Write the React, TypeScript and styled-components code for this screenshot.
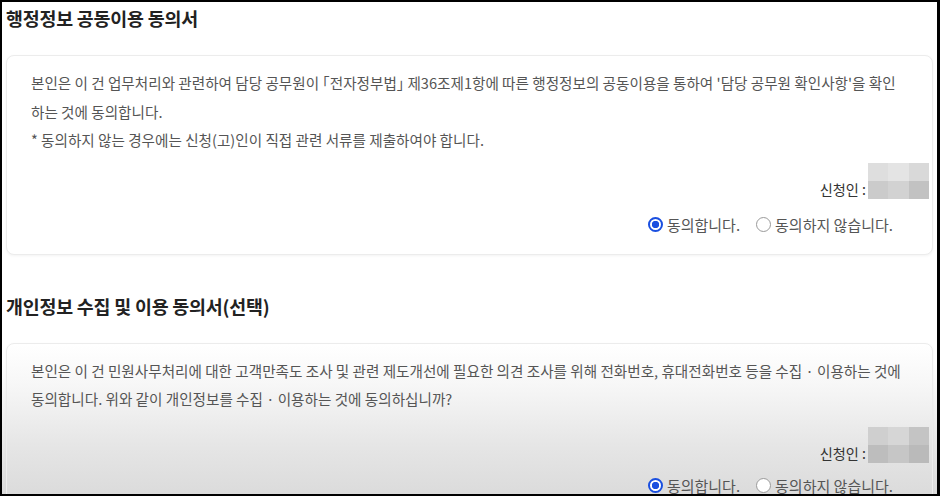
import React from 'react';
import styled, {createGlobalStyle} from 'styled-components';

const GlobalStyle = createGlobalStyle`
    html, body {
        margin: 0;
        padding: 0;
        background: #000;
    }
    body {
        font-family: "Noto Sans CJK KR", "Noto Sans", sans-serif;
    }
`;

const Frame = styled.div`
    box-sizing: border-box;
    width: 940px;
    height: 496px;
    overflow: hidden;
    border: 2px solid #000;
    border-right-width: 3px;
    padding: 4px 4px 0 4px;
    background: linear-gradient(to bottom, #fff 0, #fff 360px, #dadada 496px);
`;

const Section = styled.section`
    & + & {
        margin-top: 39px;
    }
`;

const Title = styled.h2`
    margin: 0 0 25px 0;
    font-size: 18.4px;
    line-height: 24px;
    font-weight: 700;
    color: #222;
    letter-spacing: -0.2px;
`;

const Card = styled.div<{ $shade?: boolean }>`
    box-sizing: border-box;
    border: 1px solid #ececec;
    border-radius: 8px;
    box-shadow: 0 1px 3px rgba(0, 0, 0, 0.05);
    padding: 13px 24px 19px 24px;
    background: ${p => p.$shade
        ? 'linear-gradient(to bottom, #fff 0, #f7f7f7 40px, #e6e6e6 100px, #d9d9d9 160px)'
        : '#fff'};
`;

const Body = styled.p`
    margin: 0;
    font-size: 14.6px;
    line-height: 28.5px;
    color: #555;
    white-space: nowrap;
    font-feature-settings: "halt";
`;

const SignRow = styled.div<{ $gap: number }>`
    display: flex;
    justify-content: flex-end;
    align-items: flex-end;
    margin: ${p => p.$gap}px -21px 0 0;
`;

const SignLabel = styled.span`
    font-size: 14.2px;
    line-height: 20px;
    font-weight: 400;
    color: #333;
    margin-right: 2px;
`;

const Mosaic = styled.div`
    display: grid;
    grid-template-columns: repeat(3, 1fr);
    grid-template-rows: repeat(2, 1fr);
    width: 61px;
    height: 36px;
`;

const Tile = styled.div<{ $c: string }>`
    background: ${p => p.$c};
`;

const RadioRow = styled.div<{ $gap: number }>`
    display: flex;
    justify-content: flex-end;
    align-items: center;
    gap: 16px;
    margin-top: ${p => p.$gap}px;
    padding-right: 15px;
    height: 20px;
`;

const RadioLabel = styled.label`
    display: flex;
    align-items: center;
    gap: 4px;
    font-size: 15px;
    color: #555;
    cursor: pointer;
`;

const Dot = styled.span<{ $on?: boolean }>`
    box-sizing: border-box;
    flex: none;
    width: 15px;
    height: 15px;
    border-radius: 50%;
    border: ${p => p.$on ? '2px solid #1a4fe0' : '1px solid #9a9a9a'};
    background: ${p => p.$on ? 'radial-gradient(circle, #1a4fe0 0 3.4px, #fff 4px)' : '#fff'};
`;

const tiles1 = ['#dedede', '#e4e4e4', '#d9d9d9', '#cbcbcb', '#d2d2d2', '#c2c2c2'];
const tiles2 = ['#cfcfcf', '#d6d6d6', '#c4c4c4', '#bdbdbd', '#c6c6c6', '#bababa'];

type ConsentProps = {
    title: string
    lines: string[]
    tiles: string[]
    shade?: boolean
    signGap: number
    radioGap: number
};

const Consent = ({title, lines, tiles, shade, signGap, radioGap}: ConsentProps) => (
    <Section>
        <Title>{title}</Title>
        <Card $shade={shade}>
            {lines.map(line => <Body key={line}>{line}</Body>)}
            <SignRow $gap={signGap}>
                <SignLabel>신청인 :</SignLabel>
                <Mosaic>
                    {tiles.map((c, i) => <Tile key={i} $c={c}/>)}
                </Mosaic>
            </SignRow>
            <RadioRow $gap={radioGap}>
                <RadioLabel><Dot $on/>동의합니다.</RadioLabel>
                <RadioLabel><Dot/>동의하지 않습니다.</RadioLabel>
            </RadioRow>
        </Card>
    </Section>
);

export default function App() {
    return (
        <>
            <GlobalStyle/>
            <Frame>
                <Consent
                    title="행정정보 공동이용 동의서"
                    lines={[
                        '본인은 이 건 업무처리와 관련하여 담당 공무원이 「전자정부법」 제36조제1항에 따른 행정정보의 공동이용을 통하여 \'담당 공무원 확인사항\'을 확인',
                        '하는 것에 동의합니다.',
                        '* 동의하지 않는 경우에는 신청(고)인이 직접 관련 서류를 제출하여야 합니다.',
                    ]}
                    tiles={tiles1}
                    signGap={8}
                    radioGap={16}
                />
                <Consent
                    title="개인정보 수집 및 이용 동의서(선택)"
                    lines={[
                        '본인은 이 건 민원사무처리에 대한 고객만족도 조사 및 관련 제도개선에 필요한 의견 조사를 위해 전화번호, 휴대전화번호 등을 수집 · 이용하는 것에',
                        '동의합니다. 위와 같이 개인정보를 수집 · 이용하는 것에 동의하십니까?',
                    ]}
                    tiles={tiles2}
                    shade
                    signGap={13}
                    radioGap={13}
                />
            </Frame>
        </>
    );
}
